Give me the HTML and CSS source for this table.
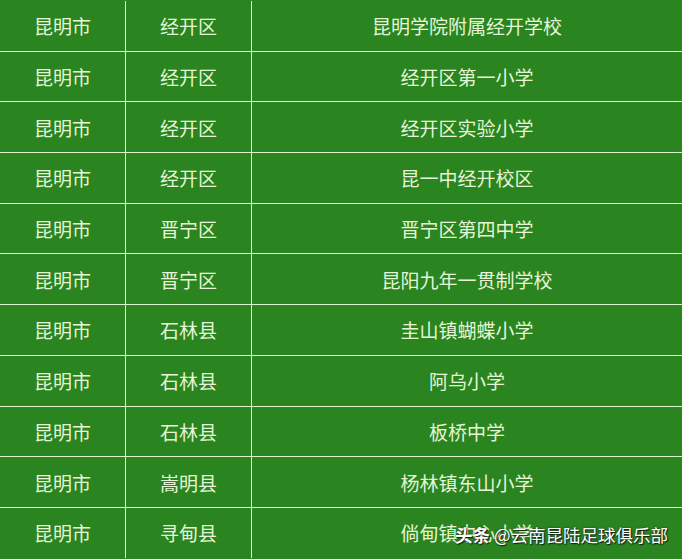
FILE: index.html
```html
<!DOCTYPE html>
<html lang="zh">
<head>
<meta charset="utf-8">
<link rel="stylesheet" href="styles.css">
</head>
<body>
<div class="page">
  <div class="grid">
    <div class="cell">昆明市</div><div class="cell">经开区</div><div class="cell">昆明学院附属经开学校</div>
    <div class="cell">昆明市</div><div class="cell">经开区</div><div class="cell">经开区第一小学</div>
    <div class="cell">昆明市</div><div class="cell">经开区</div><div class="cell">经开区实验小学</div>
    <div class="cell">昆明市</div><div class="cell">经开区</div><div class="cell">昆一中经开校区</div>
    <div class="cell">昆明市</div><div class="cell">晋宁区</div><div class="cell">晋宁区第四中学</div>
    <div class="cell">昆明市</div><div class="cell">晋宁区</div><div class="cell">昆阳九年一贯制学校</div>
    <div class="cell">昆明市</div><div class="cell">石林县</div><div class="cell">圭山镇蝴蝶小学</div>
    <div class="cell">昆明市</div><div class="cell">石林县</div><div class="cell">阿乌小学</div>
    <div class="cell">昆明市</div><div class="cell">石林县</div><div class="cell">板桥中学</div>
    <div class="cell">昆明市</div><div class="cell">嵩明县</div><div class="cell">杨林镇东山小学</div>
    <div class="cell">昆明市</div><div class="cell">寻甸县</div><div class="cell">倘甸镇中心小学</div>
  </div>
  <div class="watermark"><b>头条</b> @云南昆陆足球俱乐部</div>
</div>
</body>
</html>
```
FILE: styles.css
```css
html, body {
  margin: 0;
  padding: 0;
  background: #2a8420;
}
.page {
  position: relative;
  width: 682px;
  height: 559px;
  overflow: hidden;
}
.grid {
  display: grid;
  grid-template-columns: 125px 125px 1fr;
  grid-auto-rows: 49.7px;
  gap: 1px;
  background: #e2f3cf;
  width: 682px;
  margin-top: 1px;
}
.cell {
  background: #2a8420;
  color: #e6f6d6;
  font-family: "Noto Sans CJK SC", "Microsoft YaHei", sans-serif;
  font-size: 19px;
  display: flex;
  align-items: center;
  justify-content: center;
  line-height: 1;
}
.watermark {
  position: absolute;
  left: 455px;
  top: 523px;
  color: #ffffff;
  font-family: "Noto Sans CJK SC", sans-serif;
  font-size: 17.5px;
  line-height: 24px;
  white-space: nowrap;
  text-shadow: 1px 1px 1px #1a1a1a, 0 0 2px rgba(0,0,0,0.6);
}
.watermark b {
  font-weight: 700;
}
```
